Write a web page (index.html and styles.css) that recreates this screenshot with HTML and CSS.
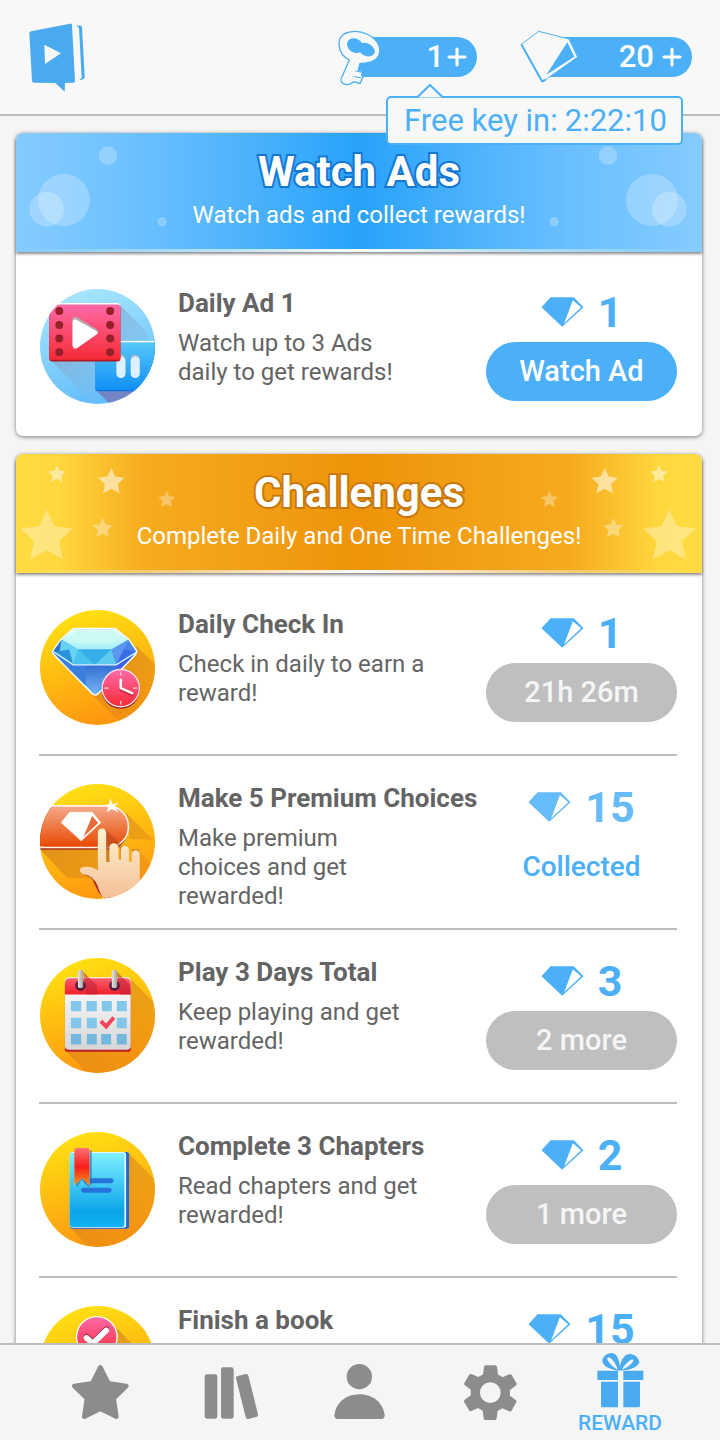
FILE: index.html
```html
<!DOCTYPE html>
<html lang="en">
<head>
<meta charset="utf-8">
<meta name="viewport" content="width=device-width, initial-scale=1">
<title>Rewards</title>
<link rel="stylesheet" href="styles.css">
</head>
<body>
<svg class="defs" aria-hidden="true">
  <defs>
    <linearGradient id="gold" x1="0" y1="0" x2=".3" y2="1"><stop offset="0" stop-color="#ffe812"/><stop offset="1" stop-color="#ff9a10"/></linearGradient>
    <linearGradient id="sky" x1="0" y1="0" x2=".3" y2="1"><stop offset="0" stop-color="#aeeaff"/><stop offset="1" stop-color="#66bffa"/></linearGradient>
    <linearGradient id="pink" x1="0" y1="0" x2="0" y2="1"><stop offset="0" stop-color="#ff6aa8"/><stop offset="1" stop-color="#f62a35"/></linearGradient>
    <linearGradient id="blue" x1="0" y1="0" x2="0" y2="1"><stop offset="0" stop-color="#5ac8fa"/><stop offset="1" stop-color="#1190f5"/></linearGradient>
    <linearGradient id="shade" x1="0" y1="0" x2="1" y2="1"><stop offset="0" stop-color="#c46f26" stop-opacity=".75"/><stop offset="1" stop-color="#e08a10" stop-opacity=".15"/></linearGradient>
    <linearGradient id="shade-film" x1="0" y1="0" x2=".8" y2="1"><stop offset="0" stop-color="#8a8fae"/><stop offset="1" stop-color="#7cc6f8" stop-opacity="0"/></linearGradient>
    <linearGradient id="crown" x1="0" y1="0" x2="0" y2="1"><stop offset="0" stop-color="#eafffb"/><stop offset="1" stop-color="#a5effa"/></linearGradient>
    <linearGradient id="pavilion" x1="0" y1="0" x2="0" y2="1"><stop offset="0" stop-color="#2f6fd0"/><stop offset="1" stop-color="#7cb4f8"/></linearGradient>
    <linearGradient id="ember" x1="0" y1="0" x2="0" y2="1"><stop offset="0" stop-color="#f5a98a"/><stop offset="1" stop-color="#e84800"/></linearGradient>
    <linearGradient id="skin" x1="0" y1="0" x2="0" y2="1"><stop offset="0" stop-color="#fdf3cf"/><stop offset="1" stop-color="#f5bd96"/></linearGradient>
    <linearGradient id="paper" x1="0" y1="0" x2="0" y2="1"><stop offset="0" stop-color="#ffffff"/><stop offset="1" stop-color="#d6d6d8"/></linearGradient>
    <linearGradient id="red" x1="0" y1="0" x2="0" y2="1"><stop offset="0" stop-color="#ff5e70"/><stop offset="1" stop-color="#ee2028"/></linearGradient>
    <linearGradient id="cover" x1="0" y1="0" x2="0" y2="1"><stop offset="0" stop-color="#7ff0ff"/><stop offset=".8" stop-color="#0aa4ea"/><stop offset="1" stop-color="#12b4f4"/></linearGradient>
    <linearGradient id="ribbon" x1="0" y1="0" x2="0" y2="1"><stop offset="0" stop-color="#ff7070"/><stop offset=".5" stop-color="#fb1c1c"/><stop offset="1" stop-color="#f59a10"/></linearGradient>
    <linearGradient id="metal" x1="0" y1="0" x2="1" y2="0"><stop offset="0" stop-color="#e8e8e4"/><stop offset="1" stop-color="#a2a09c"/></linearGradient>
    <symbol id="gem" viewBox="222 81 128 90"><path fill="currentColor" fill-rule="evenodd" d="M250 82H320L349 112 285 170 223 112ZM317 91 291 160 342 112Z"/></symbol>
    <symbol id="star" viewBox="-10 -10 20 20"><path fill="#fff" d="M0-10 2.8-3.9 9.5-3.1 4.6 1.5 5.9 8.1 0 4.8-5.9 8.1-4.6 1.5-9.5-3.1-2.8-3.9Z"/></symbol>
    <symbol id="bubbles" viewBox="48 399 480 354">
      <g fill="#fff" fill-opacity=".24"><circle cx="192" cy="600" r="78"/><circle cx="140" cy="628" r="52"/><circle cx="324" cy="467" r="28"/><circle cx="486" cy="665" r="14"/></g>
    </symbol>
    <symbol id="stars" viewBox="48 42 480 354">
      <use href="#star" x="143" y="75" width="56" height="56" opacity=".5"/>
      <use href="#star" x="292" y="84" width="84" height="84" opacity=".55"/>
      <use href="#star" x="473" y="152" width="54" height="54" opacity=".33"/>
      <use href="#star" x="276" y="234" width="64" height="64" opacity=".36"/>
      <use href="#star" x="57" y="208" width="166" height="166" opacity=".33"/>
    </symbol>
  </defs>
</svg>

<header class="topbar">
  <a class="logo" href="#" aria-label="Home">
    <svg viewBox="84 67 174 210"><path fill="#4aaaf0" fill-rule="evenodd" d="M93 95 210 72Q216 71 216 77L225 244Q225 249 220 249L195 250 194 276 166 250 102 249Q96 249 96 243L88 101Q88 96 93 95ZM133 135 135 193 183 161ZM229 79Q246 75 246 84L254 232Q254 240 238 241L245 234 237 84Z"/></svg>
  </a>
  <div class="counters">
    <div class="counter counter-key">
      <a class="pill" href="#" aria-label="1 key, get more"><span>1</span><svg class="plus" viewBox="0 0 20 20"><path d="M10 2V18M2 10H18"/></svg></a>
      <svg class="badge-key" viewBox="54 87 129 174">
        <path fill="#f8f8f8" stroke="#4cb0f8" stroke-width="4" stroke-linejoin="round" d="M88 180C52 162 46 110 78 99 122 83 172 110 179 144 184 176 156 191 120 190L115 210 128 214 125 225 129 230 120 251 106 246C100 243 98 247 94 250 86 256 66 255 63 242 62 236 65 230 68 226Z"/>
        <path fill="#4cb0f8" d="M81 130C86 110 114 110 126 129 142 124 163 138 165 155 160 173 132 174 120 157 104 165 80 152 81 130Z"/>
        <path fill="none" stroke="#4cb0f8" stroke-width="3" d="M106 213 127 217M101 229 124 234"/>
      </svg>
      <div class="tip" role="status">
        <svg class="tip-arrow" viewBox="0 0 26 14"><path d="M0 13.500 13 1 26 13.500"/></svg>
        <span>Free key in:</span><span>2:22:10</span>
      </div>
    </div>
    <div class="counter counter-gem">
      <a class="pill" href="#" aria-label="20 diamonds, get more"><span>20</span><svg class="plus" viewBox="0 0 20 20"><path d="M10 2V18M2 10H18"/></svg></a>
      <svg class="badge-gem" viewBox="597 84 180 165">
        <path fill="#f8f8f8" stroke="#4cb0f8" stroke-width="3" stroke-linejoin="round" d="M601 130 653 91 744 114 770 168 664 243Z"/>
        <path fill="none" stroke="#4cb0f8" stroke-width="6" stroke-linejoin="round" stroke-linecap="round" d="M602 132 663 241 672 237"/>
        <path fill="#4cb0f8" d="M739 124 676 221 760 167Z"/>
      </svg>
    </div>
  </div>
</header>

<main class="content">
  <section class="card">
    <div class="banner banner-ads">
      <svg class="decor"><use href="#bubbles"/></svg>
      <svg class="decor decor-right"><use href="#bubbles"/></svg>
      <h2>Watch Ads</h2>
      <p>Watch ads and collect rewards!</p>
    </div>
    <ul class="list">
      <li class="item">
        <svg class="art" viewBox="120 84 346 346">
          <path fill="url(#sky)" d="M120 84H466V430H120Z"/>
          <path fill="url(#shade-film)" d="M360 132 440 212 440 240H300ZM152 298 280 426 340 380V298Z"/>
          <path fill="#7778b8" opacity=".8" d="M290 390 332 432H400L404 390Z"/>
          <rect x="287" y="240" width="200" height="152" rx="5" fill="#1170e0"/>
          <rect x="287" y="240" width="200" height="148" rx="5" fill="url(#blue)"/>
          <path stroke="#fff" stroke-width="4" d="M350 242H470"/>
          <g fill="#9fb8cc"><rect x="350" y="281" width="27" height="66" rx="13"/><rect x="393" y="281" width="27" height="66" rx="13"/></g>
          <g fill="#dcf1fe"><rect x="350" y="287" width="27" height="65" rx="13"/><rect x="393" y="287" width="27" height="65" rx="13"/></g>
          <rect x="148" y="134" width="214" height="168" rx="9" fill="#b01822"/>
          <rect x="150" y="126" width="210" height="30" rx="8" fill="#fff"/>
          <rect x="148" y="131" width="214" height="166" rx="8" fill="url(#pink)"/>
          <g fill="#96202a"><circle cx="178" cy="150" r="12"/><circle cx="178" cy="192" r="12"/><circle cx="178" cy="233" r="12"/><circle cx="178" cy="274" r="12"/><circle cx="331" cy="150" r="12"/><circle cx="331" cy="192" r="12"/><circle cx="331" cy="233" r="12"/><circle cx="331" cy="274" r="12"/></g>
          <path fill="#b9a8ac" d="M218 178Q218 164 232 169L290 205Q300 211 290 217L232 250 218 255Z"/>
          <path fill="#fff" d="M218 185Q219 171 231 177L289 210Q298 216 289 222L231 262Q219 267 218 254Z"/>
        </svg>
        <div class="info"><h3>Daily Ad 1</h3><p>Watch up to 3 Ads daily to get rewards!</p></div>
        <div class="reward">
          <div class="amount"><svg class="gem"><use href="#gem"/></svg><span>1</span></div>
          <button class="action" type="button">Watch Ad</button>
        </div>
      </li>
    </ul>
  </section>

  <section class="card">
    <div class="banner banner-challenges">
      <svg class="decor"><use href="#stars"/></svg>
      <svg class="decor decor-right"><use href="#stars"/></svg>
      <h2>Challenges</h2>
      <p>Complete Daily and One Time Challenges!</p>
    </div>
    <ul class="list">
      <li class="item">
        <svg class="art" viewBox="60 57 346 346">
          <path fill="url(#gold)" d="M60 57H406V403H60Z"/>
          <path fill="url(#shade)" d="M350 165 420 235V403H310L215 310Z"/>
          <path fill="#3fa4ea" stroke="#f2fbff" stroke-width="5" stroke-linejoin="round" d="M160 113H286L326 145 351 180Q352 186 346 192L234 309Q225 316 217 308L101 190Q96 184 100 178L124 145Z"/>
          <path fill="#2a72cc" d="M124 147 98 184 160 222Z"/>
          <path fill="#4a86e4" d="M326 147 350 184 289 222Z"/>
          <path fill="#67d2f2" d="M124 147 175 175 160 222 118 194Z"/>
          <path fill="#2a94dc" d="M98 184 148 176 160 222Z"/>
          <path fill="#4ac4ee" d="M175 175 225 222H160Z"/>
          <path fill="#38aee8" d="M175 175H275L225 222Z"/>
          <path fill="#5ccbee" d="M275 175 289 222H225Z"/>
          <path fill="#3b6ee4" d="M305 172 350 184 289 222Z"/>
          <path fill="#5a98f0" d="M275 175 326 147 289 222Z"/>
          <path fill="url(#pavilion)" d="M160 222H289L225 312Z"/>
          <path fill="#3a7fdc" d="M160 222H197V284L145 232 104 190Z"/>
          <path fill="#3f62e8" d="M289 222 345 190 240 300Z"/>
          <path fill="url(#crown)" d="M160 115H286L326 146 275 175H175L124 146Z"/>
          <path fill="#c9faf4" d="M166 120H280L302 146 270 158H178L150 146Z"/>
          <path fill="none" stroke="#dff4ff" stroke-width="4" d="M100 182 160 222H289L350 184"/>
          <circle cx="303" cy="297" r="57" fill="#8c1c2c"/>
          <circle cx="303" cy="292" r="56" fill="url(#pink)" stroke="#ffe0e4" stroke-width="4"/>
          <path stroke="#ffb4c0" stroke-width="5" d="M303 242V255M303 330V342M253 292H266M340 292H352"/>
          <path fill="none" stroke="#b82438" stroke-width="8" stroke-linecap="round" stroke-linejoin="round" d="M303 272V296L338 312"/>
          <path fill="none" stroke="#fff" stroke-width="8" stroke-linecap="round" stroke-linejoin="round" d="M303 267V292L337 307"/>
        </svg>
        <div class="info"><h3>Daily Check In</h3><p>Check in daily to earn a reward!</p></div>
        <div class="reward">
          <div class="amount"><svg class="gem"><use href="#gem"/></svg><span>1</span></div>
          <button class="action" type="button" disabled>21h 26m</button>
        </div>
      </li>
      <li class="item">
        <svg class="art" viewBox="60 54 346 346">
          <path fill="url(#gold)" d="M60 54H406V400H60Z"/>
          <path fill="url(#shade)" d="M318 140 400 222 330 220ZM60 250H235V340L140 335ZM358 258 410 310V400H350Z"/>
          <rect x="10" y="122" width="316" height="130" rx="62" fill="#a83018"/>
          <rect x="10" y="120" width="316" height="125" rx="62" fill="url(#ember)" stroke="#fff0e8" stroke-width="5"/>
          <path fill="#b04020" opacity=".5" d="M258 190 300 232V246H258Z"/>
          <path fill="#fff" stroke="#fff" stroke-width="2" stroke-linejoin="round" d="M149 139H217L243 170 184 225 124 170Z"/>
          <path fill="#e56a36" d="M217 150 191 213 235 171Z"/>
          <path fill="#fff" d="M271 97 279 116 297 108 284 122 295 139 276 129 260 140 266 124 251 117 268 116Z"/>
          <path fill="#b02a20" d="M182 318 216 338 236 380 258 404H280L245 340Z"/>
          <path fill="#b8602c" opacity=".6" d="M258 215 272 232V290H300V240H322V290H338V250H358V300H258Z"/>
          <path fill="url(#skin)" d="M234 202Q234 188 247 188 259 188 259 202V289H269V245Q270 232 283 232 295 234 296 246V281H303V252Q305 240 316 240 327 242 328 254V288H336V264Q338 253 348 253 360 255 360 266V404H256Q242 390 234 362 222 330 188 324 178 320 180 310 184 301 204 303 222 304 234 315Z"/>
        </svg>
        <div class="info"><h3>Make 5 Premium Choices</h3><p class="narrow">Make premium choices and get rewarded!</p></div>
        <div class="reward reward-done">
          <div class="amount"><svg class="gem"><use href="#gem"/></svg><span>15</span></div>
          <span class="collected">Collected</span>
        </div>
      </li>
      <li class="item">
        <svg class="art" viewBox="60 54 346 346">
          <path fill="url(#gold)" d="M60 54H406V400H60Z"/>
          <path fill="url(#shade)" d="M333 118 420 205V410H212L137 334Z"/>
          <rect x="135" y="130" width="198" height="206" rx="7" fill="#c01c24"/>
          <rect x="135" y="112" width="198" height="218" rx="12" fill="url(#paper)"/>
          <path fill="url(#red)" d="M135 164V130Q135 115 150 115H318Q333 115 333 130V164Z"/>
          <path fill="#b81c30" opacity=".5" d="M190 95 230 135 232 164H200ZM291 95 331 135 333 164H300Z"/>
          <g fill="#5a1c40"><circle cx="182" cy="137" r="16"/><circle cx="284" cy="137" r="16"/></g>
          <g fill="url(#metal)"><rect x="174" y="90" width="16" height="54" rx="5"/><rect x="276" y="90" width="16" height="54" rx="5"/></g>
          <g fill="#82c6ea"><path d="M153 183H184V214H153ZM200 183H231V214H200ZM246 183H276V214H246ZM291 183H321V214H291ZM153 234H184V265H153ZM201 234H231V265H201ZM291 234H321V265H291Z"/></g>
          <g fill="#72b8dc"><path d="M153 283H184V314H153ZM201 283H231V314H201ZM244 283H274V314H244ZM291 283H321V314H291Z"/></g>
          <path fill="none" stroke="#f0465c" stroke-width="12" d="M243 244 259 260 282 233"/>
        </svg>
        <div class="info"><h3>Play 3 Days Total</h3><p>Keep playing and get rewarded!</p></div>
        <div class="reward">
          <div class="amount"><svg class="gem"><use href="#gem"/></svg><span>3</span></div>
          <button class="action" type="button" disabled>2 more</button>
        </div>
      </li>
      <li class="item">
        <svg class="art" viewBox="60 66 346 346">
          <path fill="url(#gold)" d="M60 66H406V412H60Z"/>
          <path fill="url(#shade)" d="M326 130 420 224V420H216L150 354Z"/>
          <rect x="150" y="126" width="178" height="231" rx="8" fill="#2468d8"/>
          <rect x="149" y="126" width="170" height="228" rx="8" fill="#e4faff"/>
          <rect x="149" y="129" width="165" height="223" rx="7" fill="url(#cover)"/>
          <path stroke="#2474dc" stroke-width="15" stroke-linecap="round" d="M200 213H274M191 241H268"/>
          <path fill="#2a6a9c" opacity=".6" d="M205 125 216 120V222L207 232 185 210 172 232 168 222Z"/>
          <path fill="url(#ribbon)" stroke="#e8b0b0" stroke-width="1" d="M163 121Q163 114 170 114H202Q209 114 209 121V228L187 205 163 226Z"/>
        </svg>
        <div class="info"><h3>Complete 3 Chapters</h3><p>Read chapters and get rewarded!</p></div>
        <div class="reward">
          <div class="amount"><svg class="gem"><use href="#gem"/></svg><span>2</span></div>
          <button class="action" type="button" disabled>1 more</button>
        </div>
      </li>
      <li class="item">
        <svg class="art" viewBox="120 110 346 346">
          <path fill="url(#gold)" d="M120 110H466V456H120Z"/>
          <path fill="url(#shade)" d="M338 164 460 286V456H330L240 240Z"/>
          <path fill="url(#cover)" d="M210 260H370V400H210Z"/>
          <circle cx="291" cy="203" r="61" fill="url(#pink)" stroke="#fff" stroke-width="4"/>
          <path fill="none" stroke="#a83858" stroke-width="17" stroke-linecap="round" d="M260 202 280 219 320 179"/>
          <path fill="none" stroke="#fff" stroke-width="17" stroke-linecap="round" stroke-linejoin="round" d="M260 206 279 223 319 184"/>
        </svg>
        <div class="info"><h3>Finish a book</h3></div>
        <div class="reward">
          <div class="amount"><svg class="gem"><use href="#gem"/></svg><span>15</span></div>
        </div>
      </li>
    </ul>
  </section>
</main>

<nav class="tabs" aria-label="Main">
  <a href="#" aria-label="Featured"><svg class="tab-icon" viewBox="213 284 177 168"><path fill="currentColor" stroke="currentColor" stroke-width="14" stroke-linejoin="round" d="M301 291 325 339 379 347 341 384 349 439 301 415 253 439 261 384 223 347 277 339Z"/></svg></a>
  <a href="#" aria-label="Library"><svg class="tab-icon" viewBox="604 284 177 168"><g fill="currentColor"><rect x="615" y="312" width="38" height="133" rx="7"/><rect x="664" y="291" width="38" height="154" rx="7"/><rect x="723" y="312" width="38" height="133" rx="7" transform="rotate(-14 742 378)"/></g></svg></a>
  <a href="#" aria-label="Profile"><svg class="tab-icon" viewBox="994 281 177 168"><g fill="currentColor"><circle cx="1079" cy="316" r="38"/><path d="M1079 369C1122 369 1150 395 1155 432Q1155 443 1145 443H1014Q1004 443 1004 432C1009 395 1036 369 1079 369Z"/></g></svg></a>
  <a href="#" aria-label="Settings"><svg class="tab-icon" viewBox="303 284 177 168"><defs><path id="tooth" d="M377 285H406Q410 285 411 290L415 322H368L372 290Q373 285 377 285Z"/></defs><g fill="currentColor"><use href="#tooth"/><use href="#tooth" transform="rotate(60 391 367)"/><use href="#tooth" transform="rotate(120 391 367)"/><use href="#tooth" transform="rotate(180 391 367)"/><use href="#tooth" transform="rotate(240 391 367)"/><use href="#tooth" transform="rotate(300 391 367)"/></g><circle cx="391" cy="367" r="45" fill="none" stroke="currentColor" stroke-width="28"/></svg></a>
  <a class="active" href="#" aria-current="page"><svg class="tab-icon" viewBox="692 243 177 168"><g fill="#4aaaf0"><path d="M711 302H773V330H711ZM789 302H849V330H789ZM722 335H773V412H727Q722 412 722 407ZM789 335H839V407Q839 412 834 412H789Z"/><path fill-rule="evenodd" d="M777 302C745 298 727 287 726 272 728 258 741 249 755 249 771 251 777 272 779 290 782 271 791 251 811 252 826 254 836 266 837 276 834 291 812 300 777 302ZM772 299C768 284 760 270 746 262 740 263 740 267 742 271 749 283 758 292 772 299ZM785 299C800 293 812 285 819 273 820 269 816 267 811 270 799 278 791 287 785 299Z"/></g></svg><span>REWARD</span></a>
</nav>
</body>
</html>
```
FILE: styles.css
```css
:root {
  --accent: #4cb0f8;
  --line: #bdbdbd;
  --text: #646464;
}

* { box-sizing: border-box; }

body {
  margin: 0;
  height: 100vh;
  display: flex;
  flex-direction: column;
  background: #f5f5f5;
  color: var(--text);
  font-family: Roboto, "Noto Sans", sans-serif;
}

h2, h3, p, ul { margin: 0; padding: 0; }
ul { list-style: none; }
a { color: inherit; text-decoration: none; }
svg { display: block; flex: none; }
.defs { position: absolute; width: 0; height: 0; }

/* Top bar */
.topbar {
  flex: none;
  display: flex;
  justify-content: space-between;
  align-items: center;
  height: 116px;
  padding: 0 28px;
  background: #f8f8f8;
  border-bottom: 2px solid var(--line);
}
.logo svg { width: 58px; height: 70px; }
.counters { display: flex; gap: 43px; }
.counter { position: relative; }
.counter-key { padding-left: 14px; }
.counter-gem { padding-left: 23px; }
.pill {
  display: flex;
  justify-content: flex-end;
  align-items: center;
  gap: 8px;
  min-width: 125px;
  height: 40px;
  padding-right: 10px;
  border-radius: 0 20px 20px 0;
  background: var(--accent);
  color: #fff;
  font-size: 31px;
  font-weight: 500;
  line-height: 40px;
}
.counter-key .pill { gap: 3px; }
.counter-gem .pill { min-width: 149px; }
.plus { width: 20px; height: 20px; fill: none; stroke: #fff; stroke-width: 3; stroke-linecap: round; }
.badge-key { position: absolute; left: 0; top: -8px; width: 43px; height: 58px; }
.badge-gem { position: absolute; left: 0; top: -8px; width: 60px; height: 55px; }
.tip {
  position: absolute;
  z-index: 2;
  left: 48px;
  top: 59px;
  display: flex;
  gap: 7px;
  height: 49px;
  padding: 0 14px 0 16px;
  border: 2px solid var(--accent);
  border-radius: 5px;
  background: #f8f8f8;
  color: var(--accent);
  font-size: 31px;
  line-height: 46px;
  white-space: nowrap;
}
.tip-arrow { position: absolute; left: 29px; top: -14px; width: 26px; height: 14px; fill: #f8f8f8; stroke: var(--accent); stroke-width: 2; }

/* Scrolling content */
.content {
  flex: 1;
  min-height: 0;
  overflow-y: auto;
  scrollbar-width: none;
  display: flex;
  flex-direction: column;
  gap: 18px;
  padding: 17px 18px 17px 16px;
}
.card {
  flex: none;
  border-radius: 7px;
  background: #fff;
  box-shadow: 0 1px 4px rgba(0, 0, 0, .5);
}
.banner {
  position: relative;
  height: 119px;
  padding-top: 15px;
  border-radius: 7px 7px 0 0;
  color: #fff;
  text-align: center;
  box-shadow: 0 2px 3px rgba(0, 0, 0, .45);
}
.banner::after {
  content: "";
  position: absolute;
  left: 0;
  right: 0;
  bottom: 0;
  height: 3px;
  background: linear-gradient(90deg, transparent, #fff 50%, transparent);
}
.banner-ads { background: linear-gradient(90deg, #85cbff, #6cc0ff 18%, #50b4fd 32%, #28a2fa 50%, #50b4fd 68%, #6cc0ff 82%, #85cbff); }
.banner-challenges { background: linear-gradient(90deg, #ffdb42, #ffd83e 6%, #f6ab1e 19%, #f4a41a 28%, #ee930a 50%, #f4a41a 72%, #f6ab1e 81%, #ffd83e 94%, #ffdb42); }
.banner h2 {
  position: relative;
  font-size: 42px;
  line-height: 48px;
  font-weight: 700;
  paint-order: stroke fill;
  -webkit-text-stroke: 4px #1476d4;
}
.banner-challenges h2 { -webkit-text-stroke-color: #c8780c; }
.banner p { position: relative; margin-top: 3px; font-size: 24px; line-height: 32px; }
.decor { position: absolute; left: 0; top: 0; width: 160px; height: 118px; }
.decor-right { left: auto; right: 2px; transform: scaleX(-1); }

.list { padding: 9px 25px 3px 23px; }
.item {
  display: grid;
  grid-template-columns: 115px 1fr 191px;
  column-gap: 23px;
  min-height: 172px;
  padding: 28px 0 0 1px;
}
.item:not(:last-child) { min-height: 174px; border-bottom: 2px solid var(--line); }
.art { width: 115px; height: 115px; border-radius: 50%; }
.info { min-width: 0; }
.info h3 { font-size: 26px; line-height: 28px; font-weight: 700; white-space: nowrap; }
.info p { max-width: 248px; margin-top: 12px; font-size: 24px; line-height: 29px; }
.info .narrow { max-width: 200px; }

.reward { display: flex; flex-direction: column; gap: 7px; text-align: center; }
.amount {
  display: flex;
  justify-content: center;
  align-items: center;
  gap: 14px;
  height: 46px;
  color: var(--accent);
  font-size: 43px;
  font-weight: 700;
  line-height: 46px;
}
.reward-done .amount { opacity: .85; }
.gem { width: 43px; height: 30px; }
.action {
  height: 59px;
  padding: 0;
  border: 0;
  border-radius: 30px;
  background: var(--accent);
  color: #fff;
  font: 500 29px/59px Roboto, "Noto Sans", sans-serif;
}
.action:disabled { background: #bfbfbf; color: #f5f5f5; }
.collected { color: var(--accent); font-size: 28px; font-weight: 500; line-height: 59px; }

/* Bottom tabs */
.tabs {
  flex: none;
  display: flex;
  height: 97px;
  padding: 0 35px;
  border-top: 2px solid var(--line);
  background: #f5f5f5;
  color: #8c8c8c;
}
.tabs a {
  flex: 1;
  display: flex;
  flex-direction: column;
  align-items: center;
  justify-content: center;
}
.tab-icon { width: 59px; height: 56px; overflow: visible; }
.tabs .active { gap: 4px; color: var(--accent); font-size: 21px; font-weight: 500; line-height: 24px; }
```
